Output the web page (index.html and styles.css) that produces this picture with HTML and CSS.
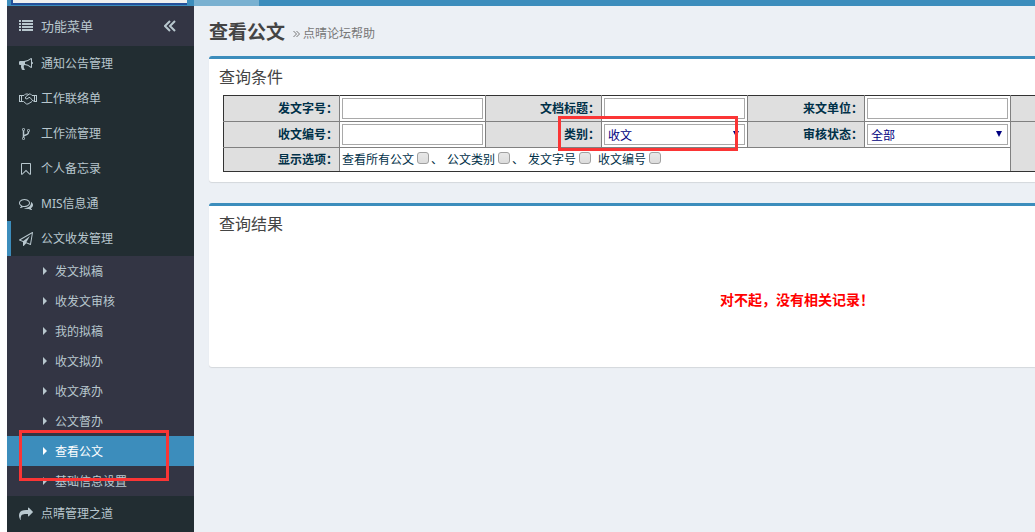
FILE: index.html
```html
<!DOCTYPE html>
<html lang="zh-CN">
<head>
<meta charset="utf-8">
<title>查看公文</title>
<link rel="stylesheet" href="styles.css">
</head>
<body>
<header class="topbar">
  <div class="topbar-field"></div>
  <div class="topbar-tab"></div>
</header>
<div class="layout">
  <nav class="sidebar">
    <div class="sidebar-head">
      <svg class="icon" viewBox="0 0 14 14"><path d="M0 1h2v2H0zM3 1h11v2H3zM0 4h2v2H0zM3 4h11v2H3zM0 7h2v2H0zM3 7h11v2H3zM0 10h2v2H0zM3 10h11v2H3z"/></svg>
      <span class="sidebar-title">功能菜单</span>
      <button class="collapse" type="button" aria-label="收起菜单"><svg class="collapse-icon" viewBox="0 0 12 12"><path d="M6 1L1 6l5 5M11 1L6 6l5 5"/></svg></button>
    </div>
    <ul class="menu">
      <li><a class="menu-link" href="#"><svg class="icon" viewBox="0 0 1792 1792"><path d="M1664 640q53 0 90.500 37.500t37.500 90.500-37.500 90.500-90.500 37.500v384q0 52-38 90t-90 38q-417-347-812-380-58 19-91 66t-31 100.500 40 92.500q-20 33-23 65.500t6 58 33.500 55 48 50 61.500 50.500q-29 58-111.500 83t-168.500 11.500-132-55.500q-7-23-29.500-87.500t-32-94.500-23-89-15-101 3.500-98.500 22-110.500h-122q-66 0-113-47t-47-113v-192q0-66 47-113t113-47h480q435 0 896-384 52 0 90 38t38 90v384zm-128 604v-954q-394 302-768 343v270q377 42 768 341z"/></svg>通知公告管理</a></li>
      <li><a class="menu-link" href="#"><svg class="icon icon-wide" viewBox="0 0 18 14"><path class="stroke" d="M3 3.500h2L6.500 2h2L10 3M15 3.500h-2L11.500 2H10L6.500 5v1.500L8 7l2-1.500h1L14 9h1M3 9.500h1.500L7.500 12H9l4-2.500"/><path d="M0 3h1v6H0zM2 3h1v7H0V9h2zM0 3h2v1H0zM17 3h1v6h-1zM15 3h1v6h2v1h-3zM16 3h2v1h-2z"/></svg>工作联络单</a></li>
      <li><a class="menu-link" href="#"><svg class="icon" viewBox="0 0 1792 1792"><path d="M672 1472q0-40-28-68t-68-28-68 28-28 68 28 68 68 28 68-28 28-68zm0-1152q0-40-28-68t-68-28-68 28-28 68 28 68 68 28 68-28 28-68zm640 128q0-40-28-68t-68-28-68 28-28 68 28 68 68 28 68-28 28-68zm96 0q0 52-26 96.500t-70 69.500q-2 287-226 414-67 38-203 81-128 40-169.500 71t-41.500 100v26q44 25 70 69.500t26 96.500q0 80-56 136t-136 56-136-56-56-136q0-52 26-96.500t70-69.500v-820q-44-25-70-69.500t-26-96.500q0-80 56-136t136-56 136 56 56 136q0 52-26 96.500t-70 69.500v497q54-26 154-57 55-17 87.500-29.500t70.500-31 59-39.500 40.500-51 28-69.500 8.500-91.500q-44-25-70-69.500t-26-96.500q0-80 56-136t136-56 136 56 56 136z"/></svg>工作流管理</a></li>
      <li><a class="menu-link" href="#"><svg class="icon" viewBox="0 0 1792 1792"><path d="M1408 256h-1024v1242l423-406 89-85 89 85 423 406v-1242zm12-128q23 0 44 9 33 13 52.500 41t19.500 62v1289q0 34-19.500 62t-52.500 41q-19 8-44 8-48 0-83-32l-441-424-441 424q-36 33-83 33-23 0-44-9-33-13-52.500-41t-19.500-62v-1289q0-34 19.500-62t52.500-41q21-9 44-9h1048z"/></svg>个人备忘录</a></li>
      <li><a class="menu-link" href="#"><svg class="icon" viewBox="0 0 1792 1792"><path d="M704 384q-153 0-286 52t-211.500 141-78.500 191q0 82 53 158t149 132l97 56-35 84q34-20 62-39l44-31 53 10q78 14 153 14 153 0 286-52t211.500-141 78.500-191-78.500-191-211.500-141-286-52zm0-128q191 0 353.500 68.500t256.500 186.500 94 257-94 257-256.500 186.500-353.500 68.500q-86 0-176-16-124 88-278 128-36 9-86 16h-3q-11 0-20.500-8t-11.500-21q-1-3-1-6.500t.5-6.500 2-6l2.500-5 3.500-5.500 4-5 4.500-5 4-4.500q5-6 23-25t26-29.500 22.500-29 25-38.500 20.500-44q-124-72-195-177t-71-224q0-139 94-257t256.500-186.500 353.500-68.500zm822 1169q10 24 20.500 44t25 38.500 22.500 29 26 29.500 23 25q1 1 4 4.500t4.500 5 4 5 3.500 5.500l2.500 5 2 6 .5 6.500-1 6.500q-3 14-13 22t-22 7q-50-7-86-16-154-40-278-128-90 16-176 16-271 0-472-132 58 4 88 4 161 0 309-45t264-129q125-92 192-212t67-254q0-77-23-152 129 71 204 178t75 230q0 120-71 224.500t-195 176.500z"/></svg>MIS信息通</a></li>
      <li>
        <a class="menu-link menu-link-open" href="#"><svg class="icon" viewBox="0 0 1792 1792"><path d="M1764 11q33 24 27 64l-256 1536q-5 29-32 45-14 8-31 8-11 0-24-5l-527-215-298 327q-18 21-47 21-14 0-23-4-19-7-30-23.500t-11-36.500v-452l-472-193q-37-14-40-55-3-39 32-59l1664-960q35-21 68 2zm-342 1499l221-1323-1434 827 336 137 863-639-478 797z"/></svg>公文收发管理</a>
        <ul class="submenu">
          <li><a class="sub-link" href="#">发文拟稿</a></li>
          <li><a class="sub-link" href="#">收发文审核</a></li>
          <li><a class="sub-link" href="#">我的拟稿</a></li>
          <li><a class="sub-link" href="#">收文拟办</a></li>
          <li><a class="sub-link" href="#">收文承办</a></li>
          <li><a class="sub-link" href="#">公文督办</a></li>
          <li class="marked"><a class="sub-link sub-link-active" href="#">查看公文</a><span class="mark mark-menu"></span></li>
          <li><a class="sub-link" href="#">基础信息设置</a></li>
        </ul>
      </li>
      <li><a class="menu-link" href="#"><svg class="icon" viewBox="0 0 1792 1792"><path d="M1792 640q0 26-19 45l-512 512q-19 19-45 19t-45-19-19-45v-256h-224q-98 0-175.500 6t-154 21.500-133 42.500-105.500 69.500-80 101-48.500 138.500-17.500 181q0 55 5 123 0 6 2.500 23.500t2.500 26.500q0 15-8.500 25t-23.500 10q-16 0-28-17-7-9-13-22t-13.500-30-10.500-24q-127-285-127-451 0-199 53-333 162-403 875-403h224v-256q0-26 19-45t45-19 45 19l512 512q19 19 19 45z"/></svg>点晴管理之道</a></li>
    </ul>
  </nav>
  <main class="content">
    <div class="page-head">
      <h1 class="page-title">查看公文</h1>
      <a class="help-link" href="#"><svg class="help-icon" viewBox="0 0 7 8"><path d="M.5 1l3 3-3 3M3.500 1l3 3-3 3"/></svg>点晴论坛帮助</a>
    </div>
    <section class="panel">
      <h2 class="panel-title">查询条件</h2>
      <form>
        <table class="query">
          <colgroup><col class="col-label"><col class="col-field"><col class="col-label"><col class="col-field"><col class="col-label-last"><col class="col-field"><col></colgroup>
          <tr>
            <th><label for="doc-no">发文字号：</label></th>
            <td><input class="field" id="doc-no" type="text"></td>
            <th><label for="doc-title">文档标题：</label></th>
            <td><input class="field" id="doc-title" type="text"></td>
            <th><label for="doc-unit">来文单位：</label></th>
            <td><input class="field" id="doc-unit" type="text"></td>
            <th></th>
          </tr>
          <tr>
            <th><label for="recv-no">收文编号：</label></th>
            <td><input class="field" id="recv-no" type="text"></td>
            <th class="marked"><label for="kind">类别：</label><span class="mark mark-kind"></span></th>
            <td><select class="field field-select" id="kind"><option>收文</option></select></td>
            <th><label for="state">审核状态：</label></th>
            <td><select class="field field-select" id="state"><option>全部</option></select></td>
            <th rowspan="2"></th>
          </tr>
          <tr class="options-row">
            <th>显示选项：</th>
            <td colspan="5">
              <div class="options">
                <label class="option">查看所有公文<input class="check" type="checkbox"></label><span class="sep">、</span>
                <label class="option">公文类别<input class="check" type="checkbox"></label><span class="sep">、</span>
                <label class="option">发文字号<input class="check" type="checkbox"></label>
                <label class="option option-next">收文编号<input class="check" type="checkbox"></label>
              </div>
            </td>
          </tr>
        </table>
      </form>
    </section>
    <section class="panel">
      <h2 class="panel-title">查询结果</h2>
      <p class="empty">对不起，没有相关记录！</p>
    </section>
  </main>
</div>
</body>
</html>
```
FILE: styles.css
```css
* { box-sizing: border-box; }
html { background: #fff; }
body {
  margin: 0 0 0 7px;
  height: 100vh;
  display: flex;
  flex-direction: column;
  overflow: hidden;
  background: #ecf0f5;
  color: #444;
  font: 12px/20px "Noto Sans", "Noto Sans CJK SC", sans-serif;
}
a { color: inherit; text-decoration: none; }
ul { margin: 0; padding: 0; list-style: none; }

.topbar {
  display: flex;
  flex: none;
  height: 6px;
  background: #3c8dbc;
}
.topbar-field {
  width: 176px;
  height: 5px;
  margin-left: 4px;
  border: solid #24509a;
  border-width: 0 0 2px 2px;
  background: #f0f0f0;
}
.topbar-tab {
  width: 65px;
  margin-left: 7px;
  background: #7ab1d1;
}

.layout { display: flex; flex: 1; min-height: 0; }

.sidebar {
  flex: none;
  width: 187px;
  background: #222d32;
  color: #b8c7ce;
}
.sidebar-head {
  display: flex;
  align-items: center;
  height: 40px;
  padding: 0 18px 0 12px;
  background: #333544;
  font-size: 13px;
}
.sidebar-title { flex: 1; }
.collapse {
  display: flex;
  padding: 0;
  border: 0;
  background: none;
  color: inherit;
}
.collapse-icon { width: 12px; height: 12px; }
.collapse-icon path { fill: none; stroke: currentColor; stroke-width: 2; }
.icon {
  flex: none;
  width: 14px;
  height: 14px;
  margin-right: 8px;
  fill: currentColor;
}
.icon-wide { width: 18px; margin-right: 4px; }
.stroke { fill: none; stroke: currentColor; }
.menu-link {
  display: flex;
  align-items: center;
  height: 35px;
  padding-left: 12px;
}
.menu-link-open { border-left: 4px solid #3c8dbc; padding-left: 8px; }
.submenu { background: #333544; }
.sub-link {
  display: flex;
  align-items: center;
  height: 30px;
  padding: 2px 0 0 36px;
}
.sub-link::before {
  content: "";
  margin: 0 8px 2px 0;
  border: solid transparent;
  border-width: 4px 0 4px 4px;
  border-left-color: currentColor;
}
.sub-link-active { background: #3c8dbc; color: #fff; }

.marked { position: relative; }
.mark {
  position: absolute;
  z-index: 1;
  border: 3px solid #fb3535;
  pointer-events: none;
}
.mark-menu { left: 12px; top: -6px; width: 150px; height: 51px; }
.mark-kind { left: 72px; top: -6px; width: 180px; height: 35px; }

.content { flex: 1; min-width: 0; padding: 10px 0 0 15px; }
.page-head { display: flex; align-items: center; height: 32px; }
.page-title { margin: 0; font-size: 19px; line-height: 32px; }
.help-link {
  display: flex;
  align-items: center;
  margin-left: 8px;
  padding-top: 4px;
  color: #777;
}
.help-icon { width: 7px; height: 8px; margin-right: 3px; }
.help-icon path { fill: none; stroke: currentColor; }

.panel {
  margin: 8px 0 21px;
  border-top: 3px solid #3c8dbc;
  border-radius: 3px 0 0 3px;
  background: #fff;
  box-shadow: 0 1px 1px rgba(0, 0, 0, .1);
}
.panel-title {
  margin: 0;
  padding: 8px 10px;
  font-size: 16px;
  font-weight: 400;
  line-height: 20px;
}
.panel form { padding: 0 0 10px 14px; }

.query {
  width: 100%;
  table-layout: fixed;
  border-collapse: collapse;
  border: 1px solid #333;
  border-right: 0;
  color: #003048;
}
.col-label { width: 116px; }
.col-label-last { width: 117px; }
.col-field { width: 146px; }
.query tr { height: 26px; }
.query .options-row { height: 24px; }
.query th, .query td { border: 1px solid #808080; padding: 0 2px; }
.query tr:first-child > * { border-top-color: #333; }
.query tr > :first-child { border-left-color: #333; }
.query .options-row > *, .query [rowspan] { border-bottom-color: #333; }
.query th { padding-right: 1px; background: #dfdfdf; text-align: right; }
.query tr > th:nth-child(7) { border-right: 0; }
.field {
  display: block;
  width: 100%;
  height: 21px;
  padding: 0 4px;
  border: 1px solid #a9a9a9;
  border-radius: 0;
  background: #fff;
  color: #000080;
  font: inherit;
}
.field-select {
  appearance: none;
  padding: 1px 3px 0;
  background: #fff url("data:image/svg+xml,%3Csvg xmlns='http://www.w3.org/2000/svg' width='6' height='6'%3E%3Cpath d='M0 0h6L3 6z' fill='%23000080'/%3E%3C/svg%3E") no-repeat right 5px top 6px;
}
.options { display: flex; align-items: center; height: 22px; }
.option { display: flex; align-items: center; }
.option-next { margin-left: 7px; }
.sep { width: 16px; margin-left: 2px; }
.check {
  appearance: none;
  width: 12px;
  height: 12px;
  margin: 0 0 4px 3px;
  border: 1px solid #a0a0a0;
  border-radius: 3px;
  background: linear-gradient(#e8e8e8, #dcdcdc);
}

.empty {
  margin: 0;
  padding: 48px 0 57px 350px;
  color: #f00;
  font-size: 14px;
  font-weight: 700;
  text-align: center;
}
```
